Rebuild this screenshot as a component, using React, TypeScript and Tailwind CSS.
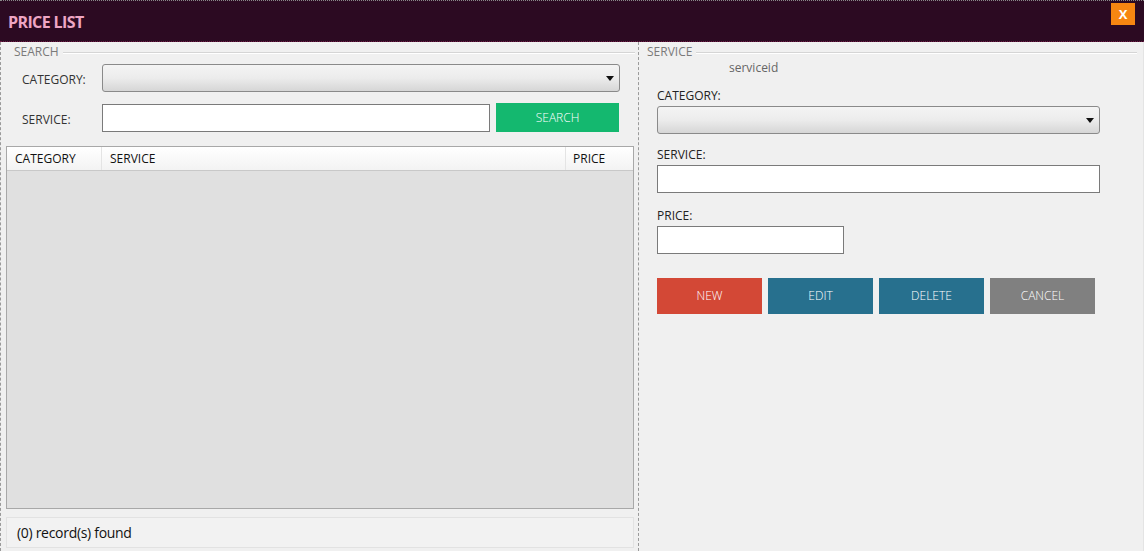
const font = { fontFamily: '"Open Sans", "Noto Sans", sans-serif' };

function Legend({ label }: { label: string }) {
  return (
    <div className="flex items-center h-[18px]">
      <span className="text-[12px] text-[#7a7a7a] pr-1 leading-none">{label}</span>
      <div className="flex-1 flex flex-col mt-[1px]">
        <div className="h-px bg-[#d5d5d5]" />
        <div className="h-px bg-white" />
      </div>
    </div>
  );
}

function Select({ className }: { className: string }) {
  return (
    <div
      className={`relative h-[28px] rounded-[3px] border border-[#8a8a8a] bg-gradient-to-b from-[#f4f4f4] via-[#ececec] to-[#d6d6d6] ${className}`}
    >
      <svg
        className="absolute right-[5px] top-[11px]"
        width="8"
        height="5"
        viewBox="0 0 8 5"
      >
        <path d="M0 0h8L4 5z" fill="#111" />
      </svg>
    </div>
  );
}

function Input({ className }: { className: string }) {
  return <div className={`h-[28px] bg-white border border-[#7a7a7a] ${className}`} />;
}

function Btn({ label, color }: { label: string; color: string }) {
  return (
    <button
      className={`w-[105px] h-[36px] ${color} text-white text-[12px] font-light flex items-center justify-center`}
    >
      {label}
    </button>
  );
}

export default function App() {
  return (
    <div className="w-[1144px] h-[551px] flex flex-col bg-[#f0f0f0] overflow-hidden" style={font}>
      <div className="h-[42px] shrink-0 bg-[#2c0a22] border-t border-dotted border-[#8a8a8a] border-b border-b-[#6e1c44] flex items-start justify-between">
        <span className="ml-[8px] mt-[13px] text-[16px] font-bold tracking-[-0.6px] text-[#eea6c4] leading-none">
          PRICE LIST
        </span>
        <button className="mt-[2px] mr-[9px] w-[24px] h-[22px] bg-[#f78611] text-white text-[13px] font-bold flex items-center justify-center leading-none">
          X
        </button>
      </div>

      <div className="flex-1 flex min-h-0">
        <div className="w-[639px] shrink-0 flex flex-col border-l border-r border-dashed border-[#9a9a9a] pl-[5px] pr-[3px]">
          <div className="pl-[8px] pt-[1px]">
            <Legend label="SEARCH" />
          </div>
          <div className="flex items-center mt-[3px]">
            <span className="w-[96px] pl-[16px] pt-[4px] text-[12px] text-[#333]">CATEGORY:</span>
            <Select className="w-[518px]" />
          </div>
          <div className="flex items-center mt-[11px]">
            <span className="w-[96px] pl-[16px] pt-[4px] text-[12px] text-[#333]">SERVICE:</span>
            <Input className="w-[388px]" />
            <button className="ml-[6px] w-[123px] h-[29px] bg-[#14b86f] text-white text-[12px] font-light flex items-center justify-center">
              SEARCH
            </button>
          </div>
          <div className="mt-[14px] h-[363px] w-[628px] border border-[#a8a8a8] bg-[#e0e0e0] flex flex-col">
            <div className="h-[24px] flex text-[12px] text-[#111] bg-gradient-to-b from-white to-[#f3f3f3] border-b border-[#c8c8c8]">
              <div className="w-[95px] pl-[8px] flex items-center border-r border-[#e4e4e4]">CATEGORY</div>
              <div className="w-[464px] pl-[8px] flex items-center border-r border-[#e4e4e4]">SERVICE</div>
              <div className="flex-1 pl-[7px] flex items-center">PRICE</div>
            </div>
          </div>
          <div className="mt-[8px] h-[31px] w-[628px] bg-[#f2f2f2] border border-[#e2e2e2] flex items-center pl-[10px] text-[14px] text-[#111] tracking-[-0.3px]">
            (0) record(s) found
          </div>
        </div>

        <div className="flex-1 flex flex-col pl-[8px] pr-[6px] border-r border-[#e4e4e4]">
          <div className="pt-[1px]">
            <Legend label="SERVICE" />
          </div>
          <div className="ml-[82px] mt-[-2px] text-[12px] text-[#666]">serviceid</div>
          <div className="ml-[10px] mt-[10px] text-[12px] text-[#222]">CATEGORY:</div>
          <Select className="ml-[10px] mt-[1px] w-[443px]" />
          <div className="ml-[10px] mt-[12px] text-[12px] text-[#222]">SERVICE:</div>
          <Input className="ml-[10px] mt-[1px] w-[443px]" />
          <div className="ml-[10px] mt-[14px] text-[12px] text-[#222]">PRICE:</div>
          <Input className="ml-[10px] mt-[1px] w-[187px]" />
          <div className="ml-[10px] mt-[24px] flex gap-[6px]">
            <Btn label="NEW" color="bg-[#d34836]" />
            <Btn label="EDIT" color="bg-[#27708e]" />
            <Btn label="DELETE" color="bg-[#27708e]" />
            <Btn label="CANCEL" color="bg-[#808080]" />
          </div>
        </div>
      </div>
    </div>
  );
}
